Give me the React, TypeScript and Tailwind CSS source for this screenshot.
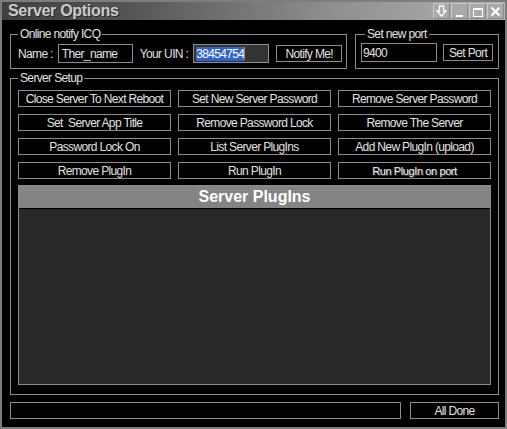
import React from "react";

const ui = "font-['Liberation_Sans',Arial,sans-serif] text-[12px] tracking-[-0.65px] leading-[14px] text-[#e2e2e2] whitespace-nowrap";

function Btn({ children, className = "" }: { children: React.ReactNode; className?: string }) {
  return (
    <div className={`h-[17px] border border-[#8c8c8c] bg-black flex items-center justify-center whitespace-nowrap ${className}`}>
      {children}
    </div>
  );
}

const setupButtons = [
  "Close Server To Next Reboot",
  "Set New Server Password",
  "Remove Server Password",
  "Set  Server App Title",
  "Remove Password Lock",
  "Remove The Server",
  "Password Lock On",
  "List Server PlugIns",
  "Add New PlugIn (upload)",
  "Remove PlugIn",
  "Run PlugIn",
];

function TitleBtn({ children }: { children: React.ReactNode }) {
  return (
    <div className="w-[17px] h-[16px] bg-[#a9a9a9] border-t border-l border-[#c8c8c8] border-r border-b border-r-[#8a8a8a] border-b-[#8a8a8a] flex items-center justify-center">
      {children}
    </div>
  );
}

export default function App() {
  return (
    <div className={`w-[507px] h-[429px] bg-black border-2 border-[#7d7d7d] flex flex-col ${ui}`}>
      {/* Title bar */}
      <div className="h-[18px] flex items-center justify-between bg-[linear-gradient(to_right,#3f3f3f,#555555_25%,#8e8e8e_65%,#b2b2b2)]">
        <span className="pl-[6px] font-bold text-[16px] tracking-[-0.3px] text-[#cbcbcb] [text-shadow:1px_1px_0_#2a2a2a]">
          Server Options
        </span>
        <div className="flex gap-[1px] pr-[1px]">
          <TitleBtn>
            <svg width="11" height="12" viewBox="0 0 11 12" fill="none" stroke="white" strokeWidth="1.3">
              <path d="M3.5 1 H7.5 V6 H10 L5.5 11 L1 6 H3.5 Z" />
            </svg>
          </TitleBtn>
          <TitleBtn>
            <div className="w-[7px] h-[2px] bg-white mt-[9px]" />
          </TitleBtn>
          <TitleBtn>
            <div className="w-[10px] h-[9px] border border-white border-t-2 mt-[3px]" />
          </TitleBtn>
          <TitleBtn>
            <svg width="11" height="11" viewBox="0 0 11 11" stroke="white" strokeWidth="2">
              <path d="M1.5 1.5 L9.5 9.5 M9.5 1.5 L1.5 9.5" />
            </svg>
          </TitleBtn>
        </div>
      </div>

      <div className="flex-1 pl-[8px] pr-[6px] flex flex-col">
        {/* Top row */}
        <div className="flex gap-[8px] mt-[7px]">
          <fieldset className="w-[337px] border border-[#8c8c8c] pl-[7px] pt-[3px] pb-[5px]">
            <legend className="px-[2px] leading-[14px]">Online notify ICQ</legend>
            <div className="flex items-center">
              <span>Name :</span>
              <div className="ml-[5px] w-[75px] h-[19px] border border-[#8c8c8c] bg-black flex items-center pl-[3px]">Ther_name</div>
              <span className="ml-[7px]">Your UIN :</span>
              <div className="ml-[5px] w-[76px] h-[19px] border border-[#8c8c8c] bg-[#333333] flex items-center pl-[2px]">
                <span className="bg-[#3164c4] text-white">38454754</span>
                <span className="w-[1px] h-[13px] bg-[#c08040]" />
              </div>
              <Btn className="ml-[7px] w-[66px]">Notify Me!</Btn>
            </div>
          </fieldset>
          <fieldset className="flex-1 border border-[#8c8c8c] pl-[5px] pt-[2px] pb-[5px]">
            <legend className="ml-[4px] px-[2px] leading-[14px]">Set new port</legend>
            <div className="flex items-center">
              <div className="w-[76px] h-[19px] border border-[#8c8c8c] bg-black flex items-center pl-[1px]">9400</div>
              <Btn className="ml-[6px] w-[50px]">Set Port</Btn>
            </div>
          </fieldset>
        </div>

        {/* Server setup */}
        <fieldset className="mt-[2px] border border-[#8c8c8c] pl-[7px] pr-[7px] pt-[5px] pb-[9px]">
          <legend className="px-[2px] leading-[14px]">Server Setup</legend>
          <div className="grid grid-cols-3 gap-x-[7px] gap-y-[7px]">
            {setupButtons.map((b) => (
              <Btn key={b}>
                <span className="whitespace-pre">{b}</span>
              </Btn>
            ))}
            <Btn>
              <span className="text-[11px] tracking-[-0.4px] text-[#f2f2f2] [text-shadow:1px_1px_0_#444]">
                Run PlugIn on port
              </span>
            </Btn>
          </div>

          <div className="mt-[6px] h-[200px] border border-[#8c8c8c] flex flex-col bg-[#282828]">
            <div className="h-[23px] bg-[#848484] border-b border-black flex items-center justify-center font-bold text-[16px] tracking-normal text-white">
              Server PlugIns
            </div>
          </div>
        </fieldset>

        {/* Status bar */}
        <div className="mt-[7px] flex gap-[9px]">
          <div className="w-[391px] h-[17px] border border-[#8c8c8c]" />
          <Btn className="w-[89px]">All Done</Btn>
        </div>
      </div>
    </div>
  );
}
